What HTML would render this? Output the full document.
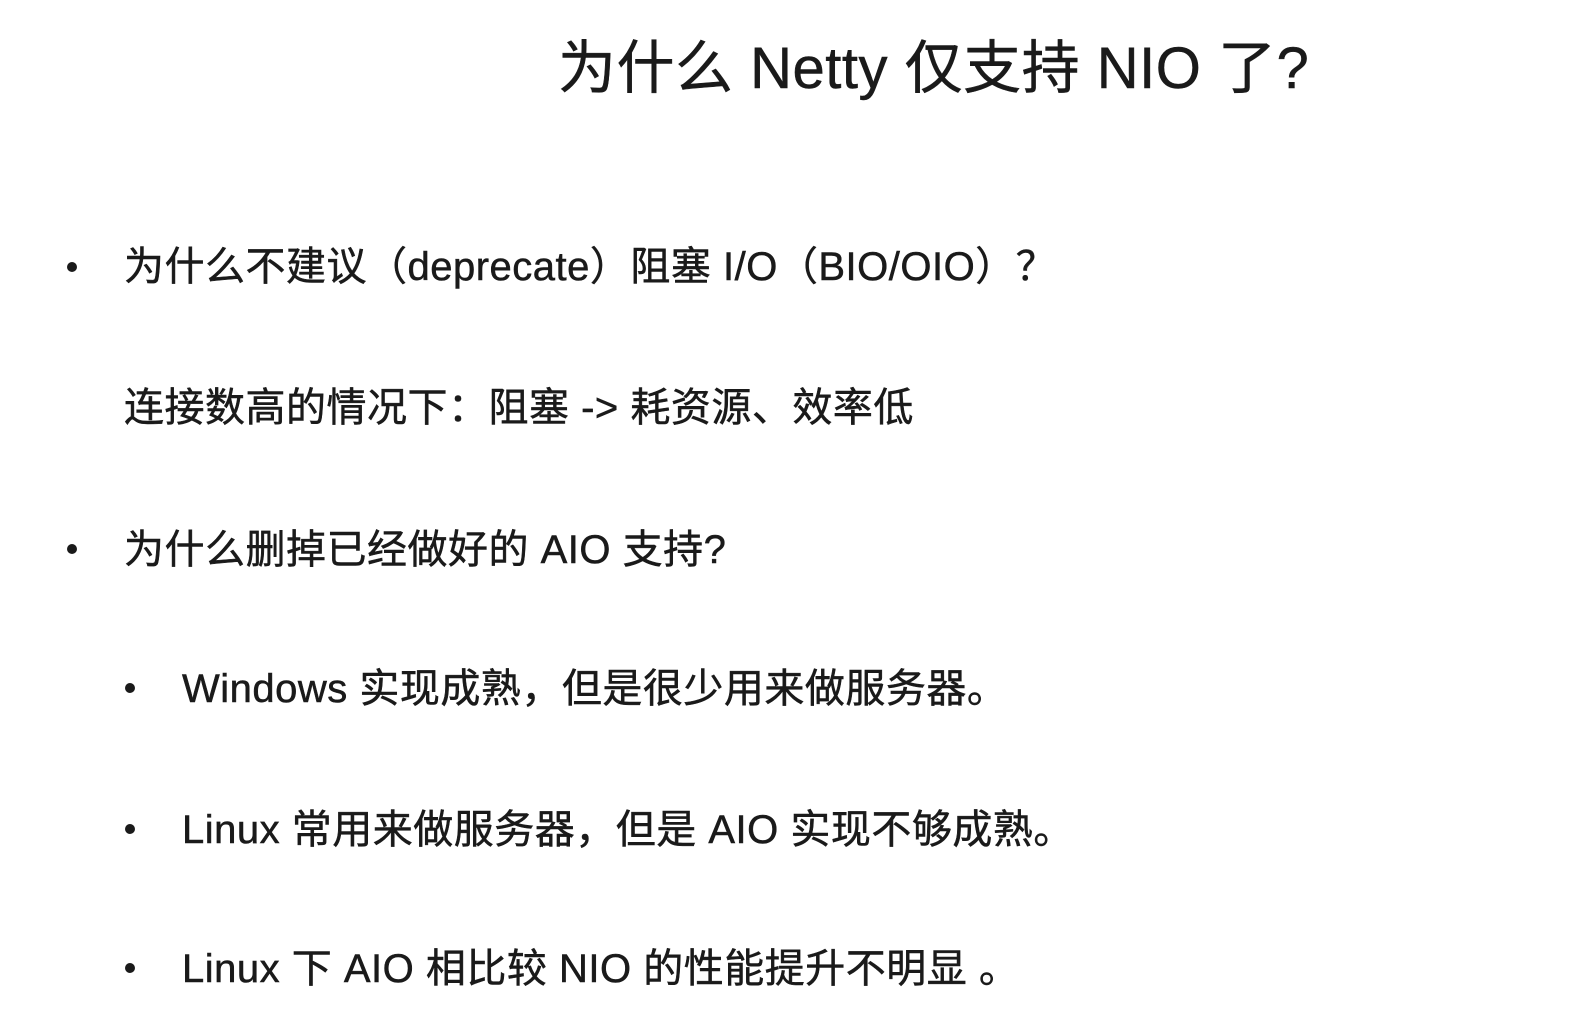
<!DOCTYPE html>
<html><head><meta charset="utf-8"><style>
html,body{margin:0;padding:0;background:#fff;}
body{width:1593px;height:1034px;position:relative;overflow:hidden;font-family:"Liberation Sans","Noto Sans CJK SC",sans-serif;color:#1a1a1a;}
.t{position:absolute;white-space:nowrap;line-height:1;-webkit-text-stroke:0.5px #1a1a1a;letter-spacing:0.5px;}
.d{position:absolute;width:10px;height:10px;border-radius:50%;background:#1a1a1a;}
</style></head><body>
<div class="t" style="left:558px;top:40px;font-size:58px;">为什么 Netty 仅支持 NIO 了?</div>
<div class="d" style="left:67px;top:262px;"></div>
<div class="t" style="left:124px;top:247px;font-size:40px;">为什么不建议（deprecate）阻塞 I/O（BIO/OIO）？</div>
<div class="t" style="left:124px;top:388px;font-size:40px;">连接数高的情况下：阻塞 -&gt; 耗资源、效率低</div>
<div class="d" style="left:67px;top:544px;"></div>
<div class="t" style="left:124px;top:530px;font-size:40px;">为什么删掉已经做好的 AIO 支持?</div>
<div class="d" style="left:125px;top:683px;"></div>
<div class="t" style="left:182px;top:669px;font-size:40px;">Windows 实现成熟，但是很少用来做服务器。</div>
<div class="d" style="left:125px;top:824px;"></div>
<div class="t" style="left:182px;top:810px;font-size:40px;">Linux 常用来做服务器，但是 AIO 实现不够成熟。</div>
<div class="d" style="left:125px;top:963px;"></div>
<div class="t" style="left:182px;top:949px;font-size:40px;">Linux 下 AIO 相比较 NIO 的性能提升不明显 。</div>
</body></html>
